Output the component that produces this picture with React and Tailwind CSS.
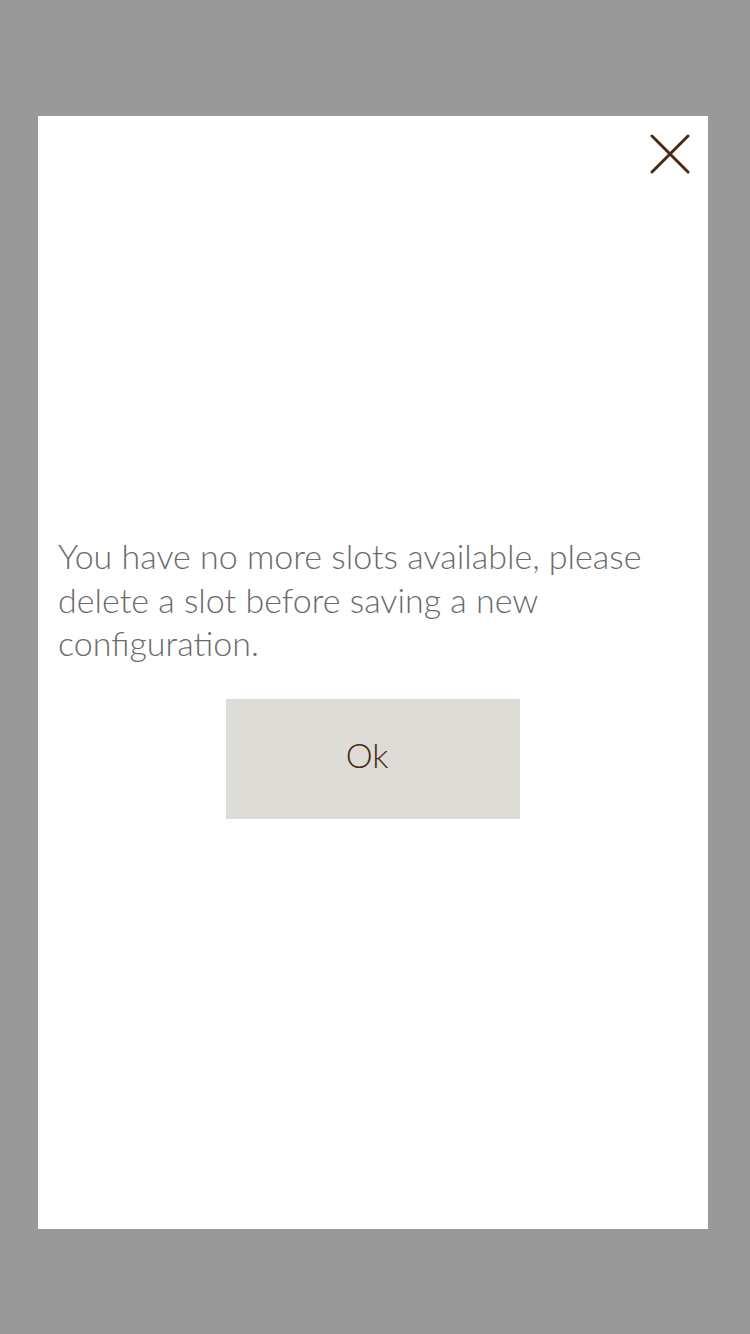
import React from 'react';

function CloseIcon() {
  return (
    <svg width="40" height="40" viewBox="0 0 40 40" fill="none">
      <path d="M2 2L38 38M38 2L2 38" stroke="#4a2a12" strokeWidth="3" strokeLinecap="round" />
    </svg>
  );
}

export default function App() {
  return (
    <div className="w-[750px] h-[1334px] bg-[#999999] pt-[116px] px-[38px]" style={{ fontFamily: '"Lato", "Open Sans", sans-serif' }}>
      <div className="relative h-[1113px] w-[670px] bg-white flex flex-col justify-center px-[20px]">
        <button className="absolute right-[18px] top-[18px]">
          <CloseIcon />
        </button>
        <div className="mt-[8px]">
          <p className="text-[34px] leading-[43.5px] font-light text-[#6b6b6b]">
            You have no more slots available, please delete a slot before saving a new configuration.
          </p>
          <div className="flex justify-center mt-[34px]">
            <button className="w-[294px] h-[120px] bg-[#dddcd7] text-[34px] font-light text-[#4a2a12] pr-[12px] pb-[8px]">
              Ok
            </button>
          </div>
        </div>
      </div>
    </div>
  );
}
